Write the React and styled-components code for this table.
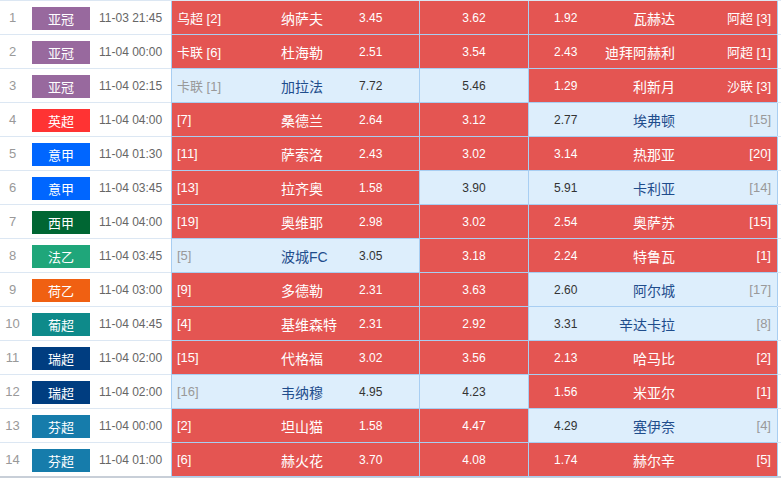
import React from "react";
import styled, { createGlobalStyle } from "styled-components";

const GlobalStyle = createGlobalStyle`
  html, body {
    margin: 0;
    padding: 0;
    background: #ffffff;
  }
  body {
    font-family: "Liberation Sans", "Noto Sans CJK SC", sans-serif;
    font-size: 13px;
  }
`;

const Table = styled.div`
  width: 781px;
  border-top: 1px solid #dce7f3;
  border-bottom: 2px solid #c8cfd8;
`;

const Row = styled.div`
  display: grid;
  grid-template-columns: 25px 66px 80px 248px 109px 249px 4px;
  height: 33px;
  border-bottom: 1px solid #dce7f3;
  &:last-child {
    border-bottom: none;
  }
`;

const No = styled.div`
  display: flex;
  align-items: center;
  justify-content: center;
  color: #999;
  font-size: 13px;
`;

const BadgeCell = styled.div`
  display: flex;
  align-items: center;
  padding-left: 7px;
`;

const Badge = styled.span`
  display: flex;
  align-items: center;
  justify-content: center;
  width: 58px;
  height: 23px;
  margin-top: 1px;
  background: ${({ $bg }) => $bg};
  color: #fff;
  font-size: 13px;
`;

const Time = styled.div`
  display: flex;
  align-items: center;
  padding-left: 8px;
  color: #666;
  font-size: 12px;
`;

const Cell = styled.div`
  display: grid;
  align-items: center;
  background: ${({ $red }) => ($red ? "#e45552" : "#ddeefc")};
  border-left: 1px solid #a8cef2;
  box-shadow: 0 1px 0 #a8cef2;
  color: ${({ $red }) => ($red ? "#fff" : "#333")};
`;

const HomeCell = styled(Cell)`
  grid-template-columns: 104px 78px 1fr;
  padding-left: 5px;
`;

const DrawCell = styled(Cell)`
  justify-items: center;
  font-size: 12px;
`;

const AwayCell = styled(Cell)`
  grid-template-columns: 46px 75px 1fr;
  padding-left: 25px;
  padding-right: 6px;
`;

const Gutter = styled.div`
  border-left: 1px solid #a8cef2;
`;

const Tag = styled.span`
  font-size: 13px;
  white-space: nowrap;
  color: ${({ $red }) => ($red ? "#fff" : "#999")};
  text-align: ${({ $right }) => ($right ? "right" : "left")};
`;

const Team = styled.span`
  font-size: 14px;
  white-space: nowrap;
  color: ${({ $red }) => ($red ? "#fff" : "#1f4d8c")};
  text-align: ${({ $right }) => ($right ? "right" : "left")};
`;

const Odds = styled.span`
  font-size: 12px;
`;

const C = {
  acl: "#98699e",
  epl: "#ff3333",
  ita: "#0066ff",
  esp: "#006633",
  fra: "#1fa67a",
  ned: "#f06012",
  por: "#0e8a8a",
  swe: "#003d80",
  fin: "#167cab",
};

const rows = [
  ["亚冠", C.acl, "11-03 21:45", "乌超 [2]", "纳萨夫", "3.45", 1, "3.62", 1, "1.92", "瓦赫达", "阿超 [3]", 1],
  ["亚冠", C.acl, "11-04 00:00", "卡联 [6]", "杜海勒", "2.51", 1, "3.54", 1, "2.43", "迪拜阿赫利", "阿超 [1]", 1],
  ["亚冠", C.acl, "11-04 02:15", "卡联 [1]", "加拉法", "7.72", 0, "5.46", 0, "1.29", "利新月", "沙联 [3]", 1],
  ["英超", C.epl, "11-04 04:00", "[7]", "桑德兰", "2.64", 1, "3.12", 1, "2.77", "埃弗顿", "[15]", 0],
  ["意甲", C.ita, "11-04 01:30", "[11]", "萨索洛", "2.43", 1, "3.02", 1, "3.14", "热那亚", "[20]", 1],
  ["意甲", C.ita, "11-04 03:45", "[13]", "拉齐奥", "1.58", 1, "3.90", 0, "5.91", "卡利亚", "[14]", 0],
  ["西甲", C.esp, "11-04 04:00", "[19]", "奥维耶", "2.98", 1, "3.02", 1, "2.54", "奥萨苏", "[15]", 1],
  ["法乙", C.fra, "11-04 03:45", "[5]", "波城FC", "3.05", 0, "3.18", 1, "2.24", "特鲁瓦", "[1]", 1],
  ["荷乙", C.ned, "11-04 03:00", "[9]", "多德勒", "2.31", 1, "3.63", 1, "2.60", "阿尔城", "[17]", 0],
  ["葡超", C.por, "11-04 04:45", "[4]", "基维森特", "2.31", 1, "2.92", 1, "3.31", "辛达卡拉", "[8]", 0],
  ["瑞超", C.swe, "11-04 02:00", "[15]", "代格福", "3.02", 1, "3.56", 1, "2.13", "哈马比", "[2]", 1],
  ["瑞超", C.swe, "11-04 02:00", "[16]", "韦纳穆", "4.95", 0, "4.23", 0, "1.56", "米亚尔", "[1]", 1],
  ["芬超", C.fin, "11-04 00:00", "[2]", "坦山猫", "1.58", 1, "4.47", 1, "4.29", "塞伊奈", "[4]", 0],
  ["芬超", C.fin, "11-04 01:00", "[6]", "赫火花", "3.70", 1, "4.08", 1, "1.74", "赫尔辛", "[5]", 1],
];

export default function App() {
  return (
    <>
      <GlobalStyle />
      <Table>
        {rows.map(([league, color, time, hTag, home, ho, hRed, d, dRed, ao, away, aTag, aRed], i) => (
          <Row key={i}>
            <No>{i + 1}</No>
            <BadgeCell>
              <Badge $bg={color}>{league}</Badge>
            </BadgeCell>
            <Time>{time}</Time>
            <HomeCell $red={hRed}>
              <Tag $red={hRed}>{hTag}</Tag>
              <Team $red={hRed}>{home}</Team>
              <Odds>{ho}</Odds>
            </HomeCell>
            <DrawCell $red={dRed}>{d}</DrawCell>
            <AwayCell $red={aRed}>
              <Odds>{ao}</Odds>
              <Team $red={aRed} $right>{away}</Team>
              <Tag $red={aRed} $right>{aTag}</Tag>
            </AwayCell>
            <Gutter />
          </Row>
        ))}
      </Table>
    </>
  );
}
